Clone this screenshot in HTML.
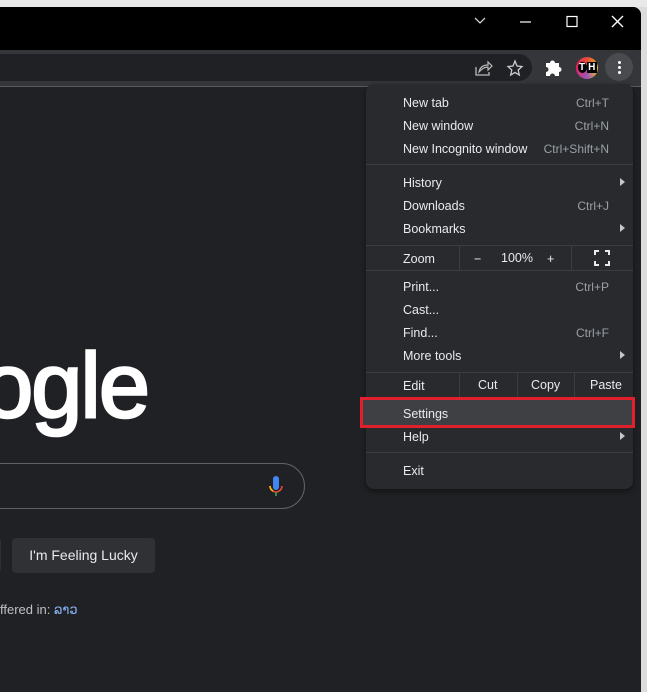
<!DOCTYPE html>
<html><head><meta charset="utf-8">
<style>
*{margin:0;padding:0;box-sizing:border-box}
body{width:647px;height:692px;overflow:hidden;background:#dcdcdc;font-family:"Liberation Sans",sans-serif;position:relative}
.a{position:absolute}
.mi{position:absolute;left:403px;font-size:12.5px;color:#e8eaed;line-height:14px}
.sc{position:absolute;right:38px;font-size:12px;color:#9aa0a6;line-height:14px;text-align:right}
.ar{position:absolute;left:620px;width:0;height:0;border-left:5px solid #c4c7c5;border-top:4px solid transparent;border-bottom:4px solid transparent}
.sep{position:absolute;left:366px;width:267px;height:1px;background:#3c3d40}
.vd{position:absolute;width:1px;background:#3c3d40}
</style></head><body>
<div class="a" style="left:0;top:0;width:647px;height:7px;background:#e9e9e9"></div>
<div class="a" style="left:0;top:7px;width:641px;height:685px;background:#202124;border-top-right-radius:8px;overflow:hidden">
  <div class="a" style="left:0;top:0;width:641px;height:43px;background:#000"></div>
  <div class="a" style="left:0;top:43px;width:641px;height:36px;background:#35363a"></div>
  <div class="a" style="left:-20px;top:47px;width:552px;height:27px;background:#202124;border-radius:14px"></div>
  <div class="a" style="left:0;top:79px;width:641px;height:1px;background:#5a5b5e"></div>
</div>
<svg class="a" style="left:470px;top:14px" width="160" height="18">
  <polyline points="5,4 10,9 15,4" fill="none" stroke="#ccc" stroke-width="1.3"/>
  <line x1="50" y1="8" x2="61" y2="8" stroke="#fff" stroke-width="1.2"/>
  <rect x="97" y="2.5" width="10" height="10" fill="none" stroke="#fff" stroke-width="1.2"/>
  <line x1="142" y1="2" x2="153" y2="13" stroke="#fff" stroke-width="1.3"/>
  <line x1="153" y1="2" x2="142" y2="13" stroke="#fff" stroke-width="1.3"/>
</svg>
<svg class="a" style="left:474px;top:59px" width="20" height="18"><path d="M2 8v8h13v-3" fill="none" stroke="#bbb" stroke-width="1.3"/><path d="M5 13c1-5 4-7 9-7V3l4 4-4 4V8c-4 0-6 2-9 5z" fill="none" stroke="#bbb" stroke-width="1.2"/></svg>
<svg class="a" style="left:506px;top:59px" width="18" height="18"><polygon points="9,2 11,7 16,7.5 12.2,11 13.3,16 9,13.4 4.7,16 5.8,11 2,7.5 7,7" fill="none" stroke="#ccc" stroke-width="1.3"/></svg>
<svg class="a" style="left:544px;top:58px" width="20" height="20"><path d="M2 5h4a2.5 2.5 0 1 1 5 0h4v4a2.5 2.5 0 1 1 0 5v4h-4a2.5 2.5 0 1 0-5 0H2v-4a2.5 2.5 0 1 0 0-5z" fill="#fff"/></svg>
<div class="a" style="left:576px;top:57px;width:22px;height:22px;border-radius:50%;background:conic-gradient(#e74c3c,#f1c40f,#9b59b6,#e91e63,#e74c3c)"></div>
<div class="a" style="left:578px;top:62px;font:bold 10px 'Liberation Sans';color:#fff;letter-spacing:1px;text-shadow:0 0 2px #000"><span style="background:#000;border-radius:50%;padding:0 1px">T</span><span style="background:#000;padding:0 1px">H</span></div>
<div class="a" style="left:605px;top:53px;width:28px;height:28px;border-radius:50%;background:#4a4b4e"></div>
<div class="a" style="left:618px;top:61px;width:3px;height:3px;background:#fff;border-radius:50%;box-shadow:0 5px 0 #fff,0 10px 0 #fff"></div>
<div class="a" style="left:-32px;top:336px;font-size:92px;color:#fff;-webkit-text-stroke:2.5px #fff;letter-spacing:-2px;line-height:100px;width:180px;text-align:right">ogle</div>
<div class="a" style="left:-40px;top:463px;width:345px;height:46px;border:1px solid #5f6368;border-radius:23px"></div>
<svg class="a" style="left:266px;top:474px" width="20" height="24"><rect x="7" y="2" width="6" height="14" rx="3" fill="#4285f4"/><path d="M4 12a6 6 0 0 0 12 0" fill="none" stroke="#ea4335" stroke-width="1.6"/><path d="M4 12a6 6 0 0 0 3 5" fill="none" stroke="#fbbc04" stroke-width="1.6"/><line x1="10" y1="18" x2="10" y2="22" stroke="#34a853" stroke-width="1.6"/></svg>
<div class="a" style="left:-20px;top:538px;width:21px;height:35px;background:#303134;border-radius:4px"></div>
<div class="a" style="left:12px;top:538px;width:143px;height:35px;background:#303134;border-radius:4px;color:#e8eaed;font-size:14px;line-height:35px;text-align:center">I'm Feeling Lucky</div>
<div class="a" style="left:0;top:602px;font-size:13px;color:#bdc1c6">ffered in: <span style="color:#8ab4f8;font-family:'Liberation Sans','DejaVu Sans',sans-serif">ລາວ</span></div>
<div class="a" style="left:366px;top:84px;width:267px;height:405px;background:#292a2d;border-radius:8px;box-shadow:0 2px 6px rgba(0,0,0,.5)"></div>
<div class="mi" style="top:96px">New tab</div><div class="sc" style="top:96px">Ctrl+T</div>
<div class="mi" style="top:119px">New window</div><div class="sc" style="top:119px">Ctrl+N</div>
<div class="mi" style="top:142px">New Incognito window</div><div class="sc" style="top:142px">Ctrl+Shift+N</div>
<div class="sep" style="top:164px"></div>
<div class="mi" style="top:176px">History</div><div class="ar" style="top:178px"></div>
<div class="mi" style="top:199px">Downloads</div><div class="sc" style="top:199px">Ctrl+J</div>
<div class="mi" style="top:222px">Bookmarks</div><div class="ar" style="top:224px"></div>
<div class="sep" style="top:245px"></div>
<div class="mi" style="top:252px">Zoom</div>
<div class="vd" style="left:459px;top:246px;height:24px"></div>
<div class="mi" style="left:474px;top:252px">−</div>
<div class="mi" style="left:501px;top:251px">100%</div>
<div class="mi" style="left:547px;top:252px">+</div>
<div class="vd" style="left:571px;top:246px;height:24px"></div>
<svg class="a" style="left:594px;top:250px" width="16" height="16"><path d="M1 5V1h4M11 1h4v4M15 11v4h-4M5 15H1v-4" fill="none" stroke="#e8eaed" stroke-width="2"/></svg>
<div class="sep" style="top:270px"></div>
<div class="mi" style="top:280px">Print...</div><div class="sc" style="top:280px">Ctrl+P</div>
<div class="mi" style="top:303px">Cast...</div>
<div class="mi" style="top:326px">Find...</div><div class="sc" style="top:326px">Ctrl+F</div>
<div class="mi" style="top:349px">More tools</div><div class="ar" style="top:351px"></div>
<div class="sep" style="top:372px"></div>
<div class="mi" style="top:379px">Edit</div>
<div class="vd" style="left:459px;top:373px;height:24px"></div>
<div class="mi" style="left:478px;top:378px">Cut</div>
<div class="vd" style="left:517px;top:373px;height:24px"></div>
<div class="mi" style="left:531px;top:378px">Copy</div>
<div class="vd" style="left:574px;top:373px;height:24px"></div>
<div class="mi" style="left:590px;top:378px">Paste</div>
<div class="a" style="left:360px;top:397px;width:275px;height:31px;border:3px solid #e0202c;background:#3f4043"></div>
<div class="mi" style="top:407px">Settings</div>
<div class="mi" style="top:430px">Help</div><div class="ar" style="top:432px"></div>
<div class="sep" style="top:452px"></div>
<div class="mi" style="top:464px">Exit</div>
</body></html>
